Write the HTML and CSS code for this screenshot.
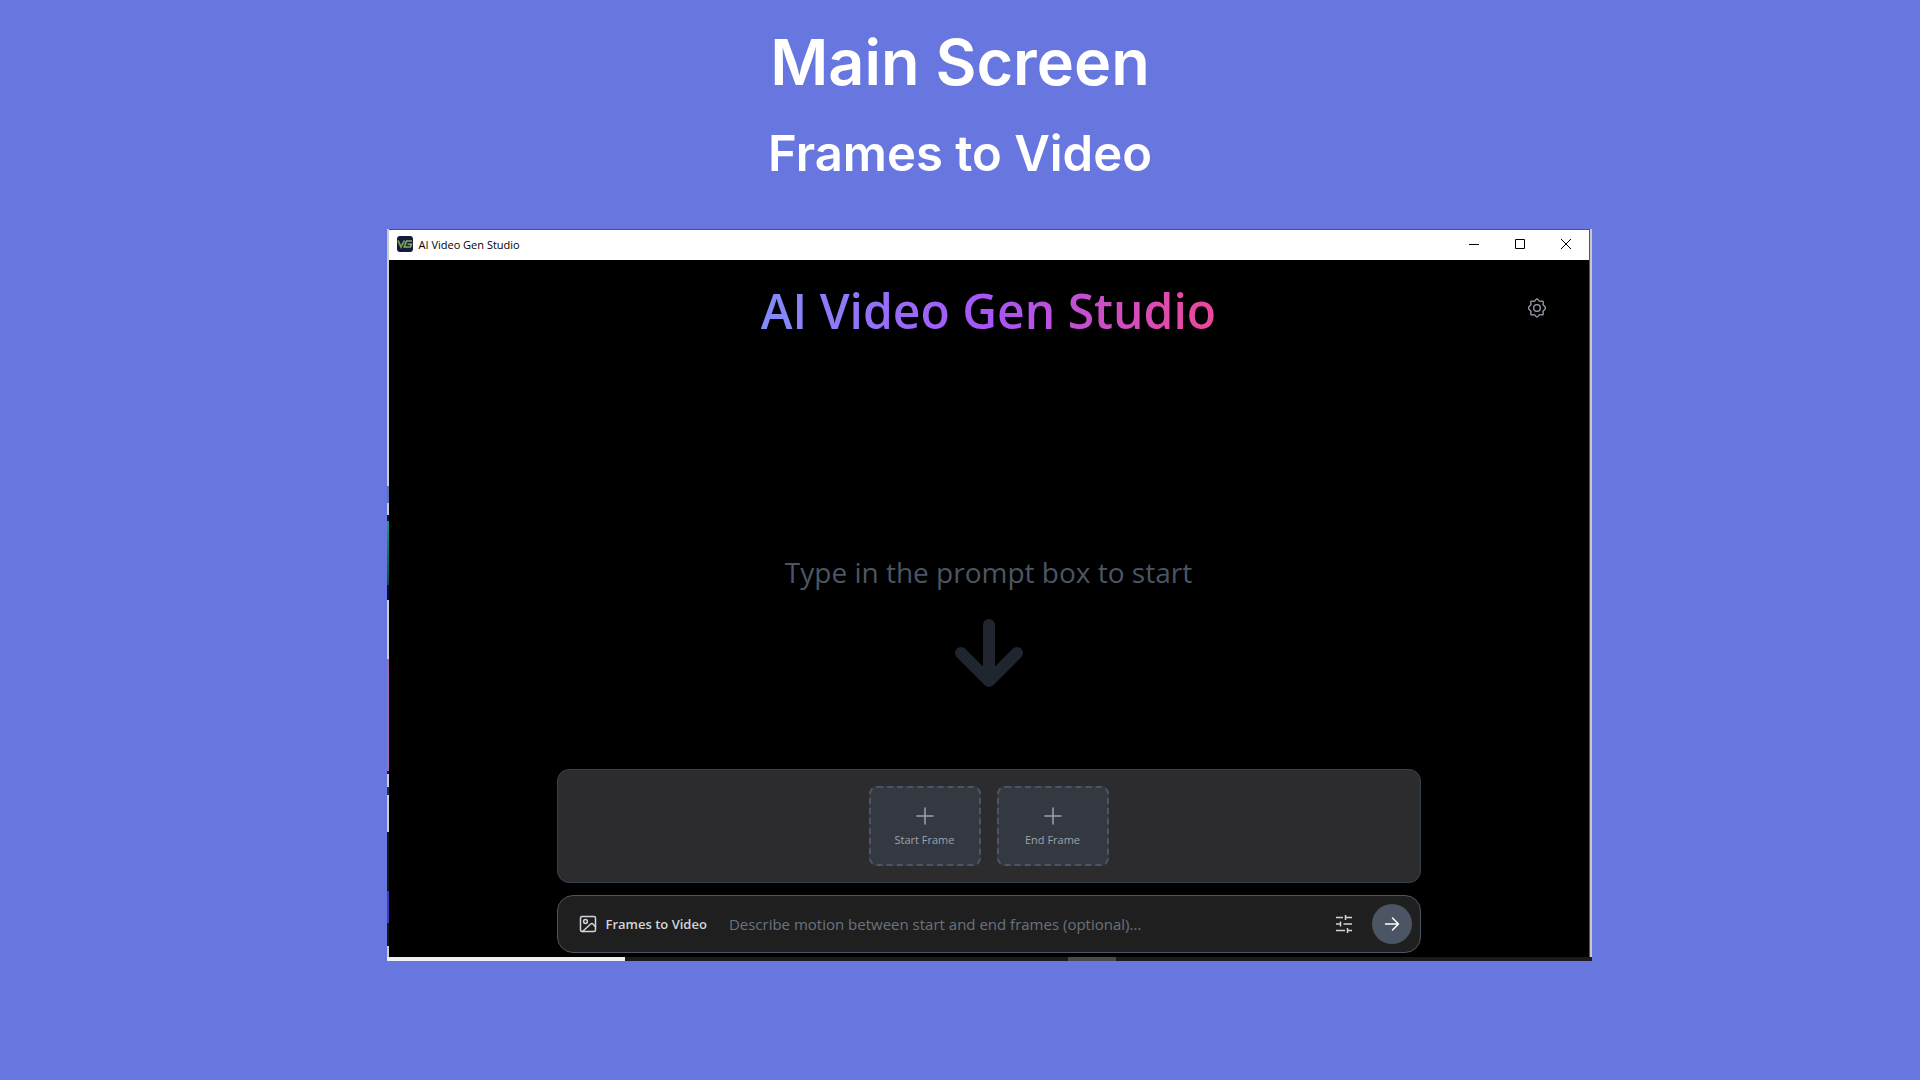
FILE: index.html
```html
<!DOCTYPE html>
<html lang="en">
<head>
    <meta charset="UTF-8">
    <meta name="viewport" content="width=device-width, initial-scale=1.0">
    <title>Main Screen - Frames to Video</title>
    <link rel="stylesheet" href="styles.css">
</head>
<body>
    <header class="slide-header">
        <h1>Main Screen</h1>
        <h2>Frames to Video</h2>
    </header>
    <div class="shot">
        <div class="shot-row">
            <div class="edge-left"></div>
            <div class="window">
                <div class="titlebar">
                    <svg class="app-icon" width="16" height="16" viewBox="0 0 16 16">
                        <rect width="16" height="16" rx="3" fill="#141c3a"/>
                        <path d="M1 4.500l3 6.500 3.500-6.500" fill="none" stroke="#6f9a5c" stroke-width="1.8"/>
                        <path d="M15 5H9.500L7.300 11h6.200l1-2.800h-4" fill="none" stroke="#86ab6c" stroke-width="1.6"/>
                    </svg>
                    <span class="titlebar-text">AI Video Gen Studio</span>
                    <button class="win-button" aria-label="Minimize">
                        <svg width="10" height="10" viewBox="0 0 10 10"><path d="M0 5.5h10"/></svg>
                    </button>
                    <button class="win-button" aria-label="Maximize">
                        <svg width="10" height="10" viewBox="0 0 10 10"><path d="M.5.5h9v9h-9z"/></svg>
                    </button>
                    <button class="win-button" aria-label="Close">
                        <svg width="10" height="10" viewBox="0 0 10 10"><path d="M0 0l10 10M10 0L0 10"/></svg>
                    </button>
                </div>
                <div class="app">
                    <div class="app-header">
                        <h3 class="app-title">AI Video Gen Studio</h3>
                        <button class="settings-button" aria-label="Settings">
                            <svg class="icon" width="20" height="20" viewBox="0.5 0.5 23 23">
                                <path d="M12 1.5c1.3 0 1.6 2.2 2.9 2.7s3-.8 4 .1-.4 2.7.1 4 2.7 1.4 2.7 3.7-2.200 2.400-2.700 3.700.8 3.100-.1 4-2.700-.4-4 .1-1.600 2.700-2.900 2.700-1.600-2.200-2.900-2.700-3 .8-4-.1.4-2.700-.1-4-2.700-1.400-2.700-3.700 2.200-2.400 2.700-3.700-.8-3.100.1-4 2.700.4 4-.1S10.700 1.500 12 1.500z"/>
                                <circle cx="12" cy="12" r="3.8"/>
                            </svg>
                        </button>
                    </div>
                    <main class="empty-state">
                        <p>Type in the prompt box to start</p>
                        <svg class="down-arrow" width="96" height="96" viewBox="0 0 24 24">
                            <path d="M12 5v14M5 12l7 7 7-7"/>
                        </svg>
                    </main>
                    <div class="composer">
                        <div class="frames-panel">
                            <button class="frame-button">
                                <svg class="icon" width="24" height="24" viewBox="0 0 24 24"><path d="M12 4v16M4 12h16"/></svg>
                                Start Frame
                            </button>
                            <button class="frame-button">
                                <svg class="icon" width="24" height="24" viewBox="0 0 24 24"><path d="M12 4v16M4 12h16"/></svg>
                                End Frame
                            </button>
                        </div>
                        <div class="prompt-bar">
                            <button class="mode-button">
                                <svg class="icon" width="20" height="20" viewBox="0 0 20 20">
                                    <rect x="2.5" y="2.5" width="15" height="15" rx="1.5"/>
                                    <circle cx="7.5" cy="7.5" r="1.9"/>
                                    <path d="M4.500 17.500l8.200-7.500c.8-.7 1.500-.7 2.200 0l2.600 2.600"/>
                                </svg>
                                Frames to Video
                            </button>
                            <input type="text" class="prompt-input" aria-label="Prompt" placeholder="Describe motion between start and end frames (optional)...">
                            <button class="round-button" aria-label="Generation options">
                                <svg class="icon sliders" width="20" height="20" viewBox="0 0 20 20">
                                    <path d="M2 3.500h7M11.500 1v5M11.500 3.500H18M2 10h4.500M6.500 7.500v5M9.500 10H18M2 16.500h9M13.500 14v5M13.500 16.500H18"/>
                                </svg>
                            </button>
                            <button class="round-button send-button" aria-label="Generate">
                                <svg class="icon" width="20" height="20" viewBox="0 0 20 20">
                                    <path d="M3.500 10h13M10.500 4l6 6-6 6"/>
                                </svg>
                            </button>
                        </div>
                    </div>
                </div>
            </div>
            <div class="edge-right"></div>
        </div>
        <div class="edge-bottom"></div>
    </div>
</body>
</html>
```

FILE: styles.css
```css
* {
    box-sizing: border-box;
}
body {
    margin: 0;
    min-height: 100vh;
    background-color: #6876df;
    font-family: "Open Sans", "Noto Sans", sans-serif;
}
h1, h2, h3, p {
    margin: 0;
}
button {
    padding: 0;
    border: none;
    background: none;
    color: inherit;
    font-family: inherit;
    cursor: pointer;
}
svg {
    display: block;
    flex: none;
}
.icon {
    fill: none;
    stroke: currentColor;
    stroke-width: 1.5;
    stroke-linecap: round;
    stroke-linejoin: round;
}
.slide-header {
    padding-top: 22px;
    color: #fff;
    font-family: "Inter", sans-serif;
    text-align: center;
}
.slide-header h1 {
    font-size: 63px;
    font-weight: 600;
    line-height: 80px;
}
.slide-header h2 {
    margin-top: 22px;
    font-size: 49px;
    font-weight: 600;
    line-height: 60px;
}

/* Window capture, sits a little right of center */
.shot {
    width: 63%;
    max-width: 1205px;
    margin: 45px auto 0;
    transform: translateX(29px);
}
.shot-row {
    display: flex;
}
.edge-left {
    flex: none;
    width: 2px;
    background: linear-gradient(#ccc 257px, #5874b4 257px 274px, #ccc 274px 286px, #101040 286px 292px,
        #16a085 292px, #0c4a48 356px, #0a0a40 356px 371px, #ccc 371px 430px, #a868b4 430px 542px,
        #201838 542px 545px, #ccc 545px 558px, #234 558px 566px, #ccc 566px 603px, #181818 603px 662px,
        #4438c0 662px 694px, #181818 694px 717px, #ccc 717px);
}
.edge-right {
    flex: none;
    width: 3px;
    border-left: 1px solid #555;
    background-color: #c8c8c8;
}
.edge-bottom {
    height: 4px;
    background: linear-gradient(to right, #f0f0f0 238px, #1b1b1b 238px 681px, #4a4a4a 681px 729px, #1b1b1b 729px);
}
.window {
    flex: 1;
    background-color: #000;
    border-top: 1px solid #555;
}
.titlebar {
    display: flex;
    align-items: center;
    height: 30px;
    padding: 0 0 2px 8px;
    background-color: #fff;
    color: #000;
    font-size: 11px;
}
.titlebar-text {
    flex: 1;
    margin-left: 6px;
}
.win-button {
    display: flex;
    align-items: center;
    justify-content: center;
    width: 46px;
    height: 28px;
}
.win-button svg {
    fill: none;
    stroke: #000;
}

.app {
    padding: 16px 16px 4px;
}
.app-header {
    display: grid;
    grid-template-columns: 1fr auto 1fr;
    align-items: start;
}
.app-title {
    grid-column: 2;
    background: linear-gradient(to right, #818cf8, #a855f7, #ec4899);
    background-clip: text;
    -webkit-background-clip: text;
    color: transparent;
    font-size: 48px;
    font-weight: 600;
    line-height: 70px;
}
.settings-button {
    justify-self: end;
    margin: 12px 16px 0 0;
    padding: 10px;
    color: #9ca3af;
}
.empty-state {
    display: flex;
    flex-direction: column;
    align-items: center;
    padding: 206px 0 68px;
    color: #4b5563;
    font-size: 28px;
    line-height: 40px;
}
.down-arrow {
    margin-top: 13px;
    fill: none;
    stroke: #1f2630;
    stroke-width: 3;
    stroke-linecap: round;
    stroke-linejoin: round;
}
.composer {
    display: flex;
    flex-direction: column;
    gap: 12px;
    max-width: 864px;
    margin: 0 auto;
}
.frames-panel {
    display: flex;
    justify-content: center;
    gap: 16px;
    padding: 16px;
    border: 1px solid #374151;
    border-radius: 12px;
    background-color: #2c2c2e;
}
.frame-button {
    display: flex;
    flex-direction: column;
    align-items: center;
    justify-content: center;
    gap: 4px;
    width: 112px;
    height: 80px;
    border: 2px dashed #4b5563;
    border-radius: 8px;
    background-color: #343840;
    color: #9ca3af;
    font-size: 11px;
    line-height: 16px;
}
.prompt-bar {
    display: flex;
    align-items: center;
    gap: 8px;
    padding: 8px;
    border: 1px solid #4b5563;
    border-radius: 16px;
    background-color: #1f1f1f;
    color: #d1d5db;
}
.mode-button {
    display: flex;
    align-items: center;
    gap: 8px;
    height: 40px;
    padding: 0 12px;
    font-size: 13px;
    font-weight: 600;
}
.prompt-input {
    flex: 1;
    min-width: 0;
    padding: 0 2px;
    border: none;
    outline: none;
    background: none;
    color: #e5e7eb;
    font-family: inherit;
    font-size: 15px;
}
.prompt-input::placeholder {
    color: #6b7280;
}
.sliders {
    stroke-linecap: butt;
}
.round-button {
    display: flex;
    align-items: center;
    justify-content: center;
    width: 40px;
    height: 40px;
    border-radius: 50%;
}
.send-button {
    background-color: #4b5563;
    color: #fff;
}
```
